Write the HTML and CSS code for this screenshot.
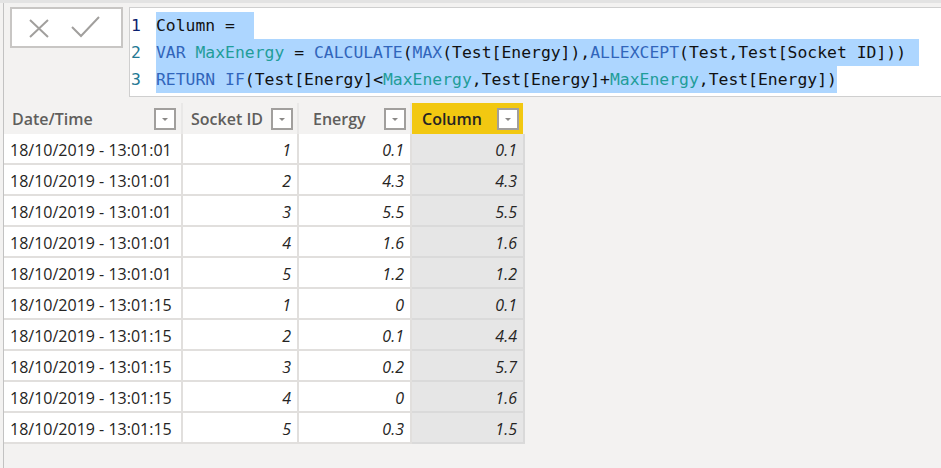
FILE: index.html
```html
<!DOCTYPE html>
<html>
<head>
<meta charset="utf-8">
<link rel="stylesheet" href="styles.css">
</head>
<body>
<div class="topstrip"></div>
<div class="app">
  <div class="formula-bar">
    <div class="buttons">
      <svg class="btn-icons" width="109" height="37" viewBox="0 0 109 37">
        <path d="M18 11 L36 28 M36 11 L18 28" stroke="#a19f9d" stroke-width="2" fill="none"/>
        <path d="M60 18 L69 27 L87 8" stroke="#a19f9d" stroke-width="2" fill="none"/>
      </svg>
    </div>
    <div class="editor">
      <div class="line"><span class="ln ln-cur">1</span><span class="code sel sel-1">Column = </span></div>
      <div class="line"><span class="ln">2</span><span class="code sel sel-2"><span class="kw">VAR</span> <span class="var">MaxEnergy</span> = <span class="kw">CALCULATE</span>(<span class="kw">MAX</span>(Test[Energy]),<span class="kw">ALLEXCEPT</span>(Test,Test[Socket ID]))</span></div>
      <div class="line"><span class="ln">3</span><span class="code sel"><span class="kw">RETURN</span> <span class="kw">IF</span>(Test[Energy]&lt;<span class="var">MaxEnergy</span>,Test[Energy]+<span class="var">MaxEnergy</span>,Test[Energy])</span></div>
    </div>
  </div>
  <table class="grid">
    <colgroup>
      <col class="c1"><col class="c2"><col class="c3"><col class="c4">
    </colgroup>
    <thead>
      <tr>
        <th><div class="hcell"><span>Date/Time</span><span class="dd"></span></div></th>
        <th><div class="hcell"><span>Socket ID</span><span class="dd"></span></div></th>
        <th><div class="hcell h-energy"><span>Energy</span><span class="dd"></span></div></th>
        <th class="active"><div class="hcell h-column"><span>Column</span><span class="dd"></span></div></th>
      </tr>
    </thead>
    <tbody>
      <tr><td class="dt">18/10/2019 - 13:01:01</td><td class="num">1</td><td class="num">0.1</td><td class="num calc">0.1</td></tr>
      <tr><td class="dt">18/10/2019 - 13:01:01</td><td class="num">2</td><td class="num">4.3</td><td class="num calc">4.3</td></tr>
      <tr><td class="dt">18/10/2019 - 13:01:01</td><td class="num">3</td><td class="num">5.5</td><td class="num calc">5.5</td></tr>
      <tr><td class="dt">18/10/2019 - 13:01:01</td><td class="num">4</td><td class="num">1.6</td><td class="num calc">1.6</td></tr>
      <tr><td class="dt">18/10/2019 - 13:01:01</td><td class="num">5</td><td class="num">1.2</td><td class="num calc">1.2</td></tr>
      <tr><td class="dt">18/10/2019 - 13:01:15</td><td class="num">1</td><td class="num">0</td><td class="num calc">0.1</td></tr>
      <tr><td class="dt">18/10/2019 - 13:01:15</td><td class="num">2</td><td class="num">0.1</td><td class="num calc">4.4</td></tr>
      <tr><td class="dt">18/10/2019 - 13:01:15</td><td class="num">3</td><td class="num">0.2</td><td class="num calc">5.7</td></tr>
      <tr><td class="dt">18/10/2019 - 13:01:15</td><td class="num">4</td><td class="num">0</td><td class="num calc">1.6</td></tr>
      <tr><td class="dt">18/10/2019 - 13:01:15</td><td class="num">5</td><td class="num">0.3</td><td class="num calc">1.5</td></tr>
    </tbody>
  </table>
</div>
</body>
</html>
```
FILE: styles.css
```css
html, body {
  margin: 0;
  padding: 0;
  height: 100%;
  background: #f3f2f1;
  overflow: hidden;
}
.topstrip {
  height: 3px;
  background: #e3e3e3;
}
.app {
  margin-left: 3px;
  border-left: 1px solid #c2c2c2;
  height: calc(100% - 3px);
}
.formula-bar {
  display: flex;
  padding-top: 4px;
}
.buttons {
  margin-left: 6px;
  width: 109px;
  height: 37px;
  border: 2px solid #c8c6c4;
  background: #fff;
  flex: none;
}
.btn-icons { display: block; }
.editor {
  margin-left: 6px;
  flex: 1;
  height: 84px;
  background: #fff;
  border: 1px solid #cfcfcf;
  border-right: none;
  padding-top: 4px;
  font-family: "DejaVu Sans Mono", "Liberation Mono", monospace;
  font-size: 16.4px;
  color: #111;
}
.line {
  display: flex;
  height: 27px;
  line-height: 27px;
}
.ln {
  width: 26px;
  padding-left: 1px;
  box-sizing: border-box;
  color: #237893;
  flex: none;
}
.ln-cur { color: #0b216f; }
.code { white-space: pre; }
.sel { background: #add6ff; }
.sel-1 { padding-right: 9px; }
.sel-2 { padding-right: 13px; }
.kw { color: #3165bb; }
.var { color: #1f9d99; }

.grid {
  margin-top: 6px;
  border-collapse: separate;
  border-spacing: 0;
  table-layout: fixed;
  width: 521px;
  font-family: "Open Sans", "Noto Sans", sans-serif;
  font-size: 16px;
  color: #252423;
}
.c1 { width: 179px; }
.c2 { width: 116px; }
.c3 { width: 113px; }
.c4 { width: 113px; }
th {
  height: 31px;
  padding: 0;
  border-right: 2px solid #e9e8e7;
  box-sizing: border-box;
  font-weight: 600;
  color: #605e5c;
  text-align: left;
}
th.active {
  background: #f2c811;
  color: #252423;
  border-right: 2px solid #f3f2f1;
}
.hcell {
  display: flex;
  align-items: center;
  justify-content: space-between;
  padding: 1px 4px 0 8px;
}
th:first-child .hcell { padding-right: 5px; }
.h-energy { padding-left: 14px; }
.h-column { padding-left: 10px; }
.dd {
  width: 18px;
  height: 18px;
  border: 2px solid #a19f9d;
  background: #fff;
  display: flex;
  align-items: center;
  justify-content: center;
}
.dd::after {
  content: "";
  border-left: 3px solid transparent;
  border-right: 3px solid transparent;
  border-top: 3px solid #8a8886;
  margin-top: 1px;
}
td {
  height: 31px;
  box-sizing: border-box;
  padding: 2px 6px 0;
  background: #fff;
  border-right: 2px solid #e1dfdd;
  border-bottom: 2px solid #e1dfdd;
  white-space: nowrap;
}
td.dt { padding-left: 6px; }
td.num {
  text-align: right;
  font-style: italic;
}
td.calc {
  background: #e6e6e6;
  border-right-color: #d9d9d9;
  border-bottom-color: #dadada;
}
```
